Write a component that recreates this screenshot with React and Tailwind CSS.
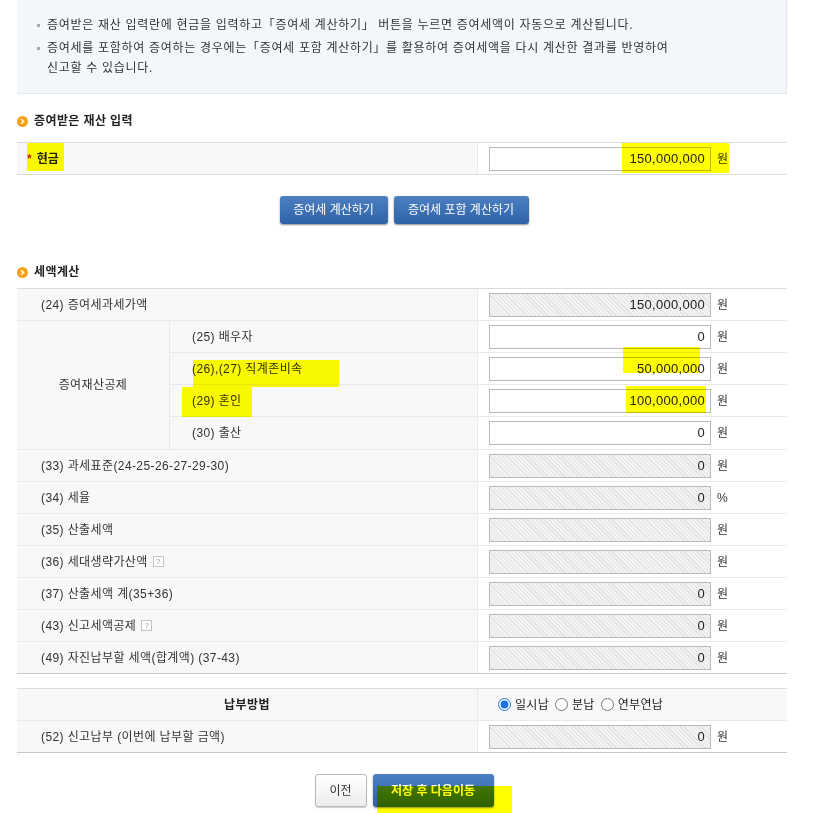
import React from 'react';

const hatch =
  'bg-[repeating-linear-gradient(45deg,#f3f3f3_0px,#f3f3f3_2px,#e2e2e2_2px,#e2e2e2_3px)]';

const Field = ({ value = '', readOnly = true, unit = '원' }) => (
  <div className="flex items-center">
    <div
      className={`w-[222px] h-[24px] border border-[#b9b9b9] flex items-center justify-end pr-[5px] text-[13px] tracking-[0.3px] text-[#222] ${
        readOnly ? hatch : 'bg-white'
      }`}
    >
      {value}
    </div>
    <span className="ml-[6px] text-[12px] text-[#333]">{unit}</span>
  </div>
);

const SectionTitle = ({ children, className }) => (
  <div className={`flex items-center gap-[6px] ${className}`}>
    <span className="w-[11px] h-[11px] rounded-full bg-[#f5a21b] flex items-center justify-center">
      <svg width="7" height="7" viewBox="0 0 7 7">
        <path d="M2.2 1.2 L4.6 3.5 L2.2 5.8" stroke="#fff" strokeWidth="1.4" fill="none" />
      </svg>
    </span>
    <span className="text-[12px] font-bold tracking-[0.4px] text-[#222]">{children}</span>
  </div>
);

const Help = () => (
  <span className="inline-flex items-center justify-center w-[11px] h-[11px] border border-[#c4c4c4] text-[8px] leading-none text-[#999] ml-[5px] bg-white">
    ?
  </span>
);

const Row = ({ label, value, readOnly = true, unit, last }) => (
  <div className={`flex h-[32px] border-b ${last ? 'border-[#c8c8c8]' : 'border-[#e9e9e9]'}`}>
    <div className="w-[461px] bg-[#f8f8f8] border-r border-[#e9e9e9] flex items-center pl-[24px] text-[12px] tracking-[0.4px] text-[#333]">
      {label}
    </div>
    <div className="flex-1 flex items-center pl-[11px]">
      <Field value={value} readOnly={readOnly} unit={unit} />
    </div>
  </div>
);

const SubRow = ({ label, value, last }) => (
  <div className={`flex h-[32px] ${last ? '' : 'border-b border-[#e9e9e9]'}`}>
    <div className="w-[308px] bg-[#f8f8f8] border-r border-[#e9e9e9] flex items-center pl-[22px] text-[12px] tracking-[0.4px] text-[#333]">
      {label}
    </div>
    <div className="flex-1 flex items-center pl-[11px]">
      <Field value={value} readOnly={false} />
    </div>
  </div>
);

const Mark = ({ className }) => (
  <div className={`absolute bg-[#ffff00] mix-blend-multiply pointer-events-none ${className}`} />
);

export default function App() {
  return (
    <div className="relative w-[836px] h-[813px] overflow-hidden bg-white font-['Liberation_Sans','Noto_Sans_CJK_KR',sans-serif] text-[#333]">
      <div className="ml-[17px] w-[770px]">
        {/* 안내 */}
        <div className="h-[94px] bg-[#f3f6fa] border-b border-r border-[#e3e8ee] pl-[20px] pt-[15px] text-[12px] tracking-[0.7px] text-[#333]">
          <div className="flex items-start leading-[20px] mb-[3px]">
            <span className="w-[3px] h-[3px] bg-[#aaa] mt-[9px] mr-[7px]" />
            <span>증여받은 재산 입력란에 현금을 입력하고「증여세 계산하기」 버튼을 누르면 증여세액이 자동으로 계산됩니다.</span>
          </div>
          <div className="flex items-start leading-[20px]">
            <span className="w-[3px] h-[3px] bg-[#aaa] mt-[9px] mr-[7px]" />
            <span>
              증여세를 포함하여 증여하는 경우에는「증여세 포함 계산하기」를 활용하여 증여세액을 다시 계산한 결과를 반영하여
              <br />
              신고할 수 있습니다.
            </span>
          </div>
        </div>

        <SectionTitle className="h-[48px] pt-[6px]">증여받은 재산 입력</SectionTitle>

        <div className="flex h-[33px] border-t border-b border-[#dcdcdc]">
          <div className="w-[461px] bg-[#f8f8f8] border-r border-[#e9e9e9] flex items-center pl-[10px] text-[12px] font-bold text-[#222]">
            <span className="text-[#c0272d] mr-[5px]">*</span>현금
          </div>
          <div className="flex-1 flex items-center pl-[11px]">
            <Field value="150,000,000" readOnly={false} />
          </div>
        </div>

        <div className="flex justify-center gap-[6px] mt-[21px] pl-[4px]">
          <button className="w-[108px] h-[28px] rounded-[3px] bg-[linear-gradient(#4d80c2,#2f62a6)] text-white text-[12px] shadow-[0_1px_2px_rgba(0,0,0,0.45)]">
            증여세 계산하기
          </button>
          <button className="w-[135px] h-[28px] rounded-[3px] bg-[linear-gradient(#4d80c2,#2f62a6)] text-white text-[12px] shadow-[0_1px_2px_rgba(0,0,0,0.45)]">
            증여세 포함 계산하기
          </button>
        </div>

        <SectionTitle className="h-[64px] pt-[32px]">세액계산</SectionTitle>

        <div className="border-t border-[#dcdcdc]">
          <Row label="(24) 증여세과세가액" value="150,000,000" />
          <div className="flex border-b border-[#e9e9e9]">
            <div className="w-[153px] bg-[#f8f8f8] border-r border-[#e9e9e9] flex items-center justify-center text-[12px] tracking-[0.4px] text-[#333]">
              증여재산공제
            </div>
            <div className="flex-1">
              <SubRow label="(25) 배우자" value="0" />
              <SubRow label="(26),(27) 직계존비속" value="50,000,000" />
              <SubRow label="(29) 혼인" value="100,000,000" />
              <SubRow label="(30) 출산" value="0" last />
            </div>
          </div>
          <Row label="(33) 과세표준(24-25-26-27-29-30)" value="0" />
          <Row label="(34) 세율" value="0" unit="%" />
          <Row label="(35) 산출세액" value="" />
          <Row label={<>(36) 세대생략가산액<Help /></>} value="" />
          <Row label="(37) 산출세액 계(35+36)" value="0" />
          <Row label={<>(43) 신고세액공제<Help /></>} value="0" />
          <Row label="(49) 자진납부할 세액(합계액) (37-43)" value="0" last />
        </div>

        <div className="mt-[14px] border-t border-[#dcdcdc]">
          <div className="flex h-[32px] border-b border-[#e9e9e9]">
            <div className="w-[461px] bg-[#f8f8f8] border-r border-[#e9e9e9] flex items-center justify-center text-[12px] font-bold tracking-[0.4px] text-[#222]">
              납부방법
            </div>
            <div className="flex-1 flex items-center pl-[20px] bg-[#f8f8f8] text-[12px] tracking-[0.3px] text-[#222]">
              <label className="flex items-center mr-[6px]">
                <input type="radio" name="pay" defaultChecked className="w-[13px] h-[13px] m-0 mr-[4px] accent-[#1a73e8]" />
                일시납
              </label>
              <label className="flex items-center mr-[6px]">
                <input type="radio" name="pay" className="w-[13px] h-[13px] m-0 mr-[4px]" />
                분납
              </label>
              <label className="flex items-center">
                <input type="radio" name="pay" className="w-[13px] h-[13px] m-0 mr-[4px]" />
                연부연납
              </label>
            </div>
          </div>
          <Row label="(52) 신고납부 (이번에 납부할 금액)" value="0" last />
        </div>

        <div className="flex justify-center gap-[6px] mt-[21px] pl-[4px]">
          <button className="w-[52px] h-[33px] rounded-[3px] border border-[#b8b8b8] bg-[linear-gradient(#ffffff,#ececec)] text-[12px] text-[#333] shadow-[0_1px_1px_rgba(0,0,0,0.2)]">
            이전
          </button>
          <button className="w-[121px] h-[33px] rounded-[3px] bg-[linear-gradient(#4d80c2,#2f62a6)] text-white text-[12px] font-bold shadow-[0_1px_2px_rgba(0,0,0,0.45)]">
            저장 후 다음이동
          </button>
        </div>
      </div>

      {/* 형광펜 표시 */}
      <Mark className="left-[27px] top-[143px] w-[37px] h-[28px]" />
      <Mark className="left-[622px] top-[143px] w-[107px] h-[30px]" />
      <Mark className="left-[193px] top-[360px] w-[146px] h-[27px]" />
      <Mark className="left-[182px] top-[387px] w-[70px] h-[30px]" />
      <Mark className="left-[623px] top-[347px] w-[77px] h-[26px]" />
      <Mark className="left-[626px] top-[386px] w-[80px] h-[27px]" />
      <Mark className="left-[377px] top-[786px] w-[135px] h-[27px]" />
    </div>
  );
}
